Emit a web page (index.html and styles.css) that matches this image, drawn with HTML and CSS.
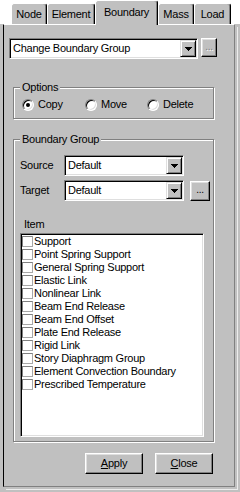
FILE: index.html
```html
<!DOCTYPE html>
<html lang="en">
<head>
    <meta charset="UTF-8">
    <title>Boundary</title>
    <link rel="stylesheet" href="styles.css">
</head>
<body>
    <div class="tabs">
        <div class="tab tab-node">Node</div>
        <div class="tab tab-element">Element</div>
        <div class="tab tab-boundary active">Boundary</div>
        <div class="tab tab-mass">Mass</div>
        <div class="tab tab-load">Load</div>
    </div>

    <div class="panel">
        <div class="top-row">
            <div class="combo combo-main">
                <span class="combo-text">Change Boundary Group</span>
                <span class="drop-btn"><svg width="7" height="4" viewBox="0 0 7 4"><path d="M0 0h7L3.5 4z"/></svg></span>
            </div>
            <button class="btn btn-dots btn-top" disabled>...</button>
        </div>

        <fieldset class="group group-options">
            <legend>Options</legend>
            <div class="radio-row">
                <label class="radio-item item-copy"><span class="radio checked"></span>Copy</label>
                <label class="radio-item item-move"><span class="radio"></span>Move</label>
                <label class="radio-item"><span class="radio"></span>Delete</label>
            </div>
        </fieldset>

        <fieldset class="group group-boundary">
            <legend>Boundary Group</legend>
            <div class="field-row row-source">
                <span class="field-label">Source</span>
                <div class="combo combo-small">
                    <span class="combo-text">Default</span>
                    <span class="drop-btn"><svg width="7" height="4" viewBox="0 0 7 4"><path d="M0 0h7L3.5 4z"/></svg></span>
                </div>
            </div>
            <div class="field-row row-target">
                <span class="field-label">Target</span>
                <div class="combo combo-small">
                    <span class="combo-text">Default</span>
                    <span class="drop-btn"><svg width="7" height="4" viewBox="0 0 7 4"><path d="M0 0h7L3.5 4z"/></svg></span>
                </div>
                <button class="btn btn-dots btn-target">...</button>
            </div>

            <div class="item-label">Item</div>
            <div class="list">
                <div class="list-item"><span class="check"></span>Support</div>
                <div class="list-item"><span class="check"></span>Point Spring Support</div>
                <div class="list-item"><span class="check"></span>General Spring Support</div>
                <div class="list-item"><span class="check"></span>Elastic Link</div>
                <div class="list-item"><span class="check"></span>Nonlinear Link</div>
                <div class="list-item"><span class="check"></span>Beam End Release</div>
                <div class="list-item"><span class="check"></span>Beam End Offset</div>
                <div class="list-item"><span class="check"></span>Plate End Release</div>
                <div class="list-item"><span class="check"></span>Rigid Link</div>
                <div class="list-item"><span class="check"></span>Story Diaphragm Group</div>
                <div class="list-item"><span class="check"></span>Element Convection Boundary</div>
                <div class="list-item"><span class="check"></span>Prescribed Temperature</div>
            </div>
        </fieldset>

        <div class="button-row">
            <button class="btn btn-action"><u>A</u>pply</button>
            <button class="btn btn-action"><u>C</u>lose</button>
        </div>
    </div>
</body>
</html>
```

FILE: styles.css
```css
body{
    margin:0;
    height:492px;
    background:#c0c0c0;
    font-family:"Liberation Sans", Arial, sans-serif;
    font-size:11px;
    letter-spacing:-0.25px;
    line-height:13px;
    color:#000;
    overflow:hidden;
}

/* tab strip */
.tabs{
    height:24px;
    background:#fff;
    display:flex;
    align-items:flex-end;
    padding-left:11px;
}
.tab{
    box-sizing:border-box;
    height:21px;
    padding-top:4px;
    text-align:center;
    background:#c0c0c0;
    border-top:1px solid #fff;
    border-left:1px solid #fff;
    border-right:1px solid #000;
    border-radius:3px 3px 0 0;
    box-shadow:inset -1px 0 0 #808080;
}
.tab-node{ width:36px; }
.tab-element{ width:48px; }
.tab-boundary{ width:63px; }
.tab-mass{ width:36px; }
.tab-load{ width:37px; }
.tab.active{
    position:relative;
    height:25px;
    margin-bottom:-1px;
    padding-top:5px;
}

/* panel */
.panel{
    box-sizing:border-box;
    margin-left:3px;
    width:232px;
    height:463px;
    border-left:1px solid #000;
    border-top:1px solid #fff;
    border-right:1px solid #808080;
    border-bottom:1px solid #808080;
    box-shadow:2px 2px 0 #c0c0c0, 3px 3px 0 #ececec;
}

.top-row{
    display:flex;
    align-items:flex-start;
    margin:13px 0 0 5px;
}

/* combo boxes */
.combo{
    box-sizing:border-box;
    display:flex;
    align-items:center;
    height:21px;
    padding:2px;
    background:#fff;
    border:1px solid;
    border-color:#808080 #fff #fff #808080;
    box-shadow:inset 1px 1px 0 #000, inset -1px -1px 0 #dfdfdf;
}
.combo-main{ width:189px; }
.combo-small{ width:120px; }
.combo-text{
    flex:1;
    padding-left:1px;
    white-space:nowrap;
    overflow:hidden;
}
.drop-btn{
    box-sizing:border-box;
    width:16px;
    height:17px;
    margin-right:-1px;
    display:flex;
    align-items:center;
    justify-content:center;
    background:#c0c0c0;
    border:1px solid;
    border-color:#dfdfdf #000 #000 #dfdfdf;
    box-shadow:inset 1px 1px 0 #fff, inset -1px -1px 0 #808080;
}
.drop-btn svg{
    display:block;
    shape-rendering:crispEdges;
}

/* buttons */
.btn{
    box-sizing:border-box;
    padding:0;
    background:#c0c0c0;
    font:inherit;
    letter-spacing:inherit;
    color:#000;
    border:1px solid;
    border-color:#fff #000 #000 #fff;
    box-shadow:inset -1px -1px 0 #808080, inset 1px 1px 0 #dfdfdf;
}
.btn[disabled]{
    color:#808080;
    text-shadow:1px 1px 0 #fff;
}
.btn-dots{
    font-size:10px;
    line-height:10px;
    padding-bottom:2px;
}
.btn-top{
    width:16px;
    height:19px;
    margin-left:3px;
}
.btn-target{
    width:20px;
    height:20px;
    margin-left:6px;
    align-self:flex-start;
    margin-top:1px;
}
.btn-action{
    width:58px;
    height:21px;
}

/* group boxes */
.group{
    min-width:0;
    width:199px;
    margin:0 0 0 9px;
    padding:0;
    border:1px solid #808080;
    box-shadow:inset 1px 1px 0 #fff, 1px 1px 0 #fff;
}
.group legend{
    margin-left:6px;
    padding:0 2px;
    line-height:13px;
    background:#c0c0c0;
}
.group-options{
    margin-top:22px;
    padding-bottom:7px;
}
.group-boundary{
    margin-top:14px;
    padding-bottom:4px;
}

.radio-row{
    display:flex;
    align-items:center;
    margin-top:4px;
    padding-left:8px;
    height:13px;
}
.radio-item{
    display:flex;
    align-items:center;
    gap:4px;
}
.item-copy{ width:63px; }
.item-move{ width:62px; }
.radio{
    box-sizing:border-box;
    position:relative;
    width:12px;
    height:12px;
    border-radius:50%;
    background:#fff;
    border:1px solid;
    border-color:#808080 #fff #fff #808080;
    box-shadow:inset 1px 1px 0 #000, inset -1px -1px 0 #dfdfdf;
}
.radio.checked::after{
    content:"";
    position:absolute;
    left:3px;
    top:3px;
    width:4px;
    height:4px;
    border-radius:50%;
    background:#000;
}

.field-row{
    display:flex;
    align-items:center;
    padding-left:6px;
}
.row-source{ margin-top:9px; }
.row-target{ margin-top:4px; }
.field-label{
    width:44px;
}

.item-label{
    margin-top:17px;
    padding-left:10px;
}

/* check list */
.list{
    box-sizing:border-box;
    width:184px;
    height:204px;
    margin:2px 0 0 6px;
    padding:1px 0 0 1px;
    background:#fff;
    border:1px solid;
    border-color:#808080 #fff #fff #808080;
    box-shadow:inset 1px 1px 0 #000, inset -1px -1px 0 #dfdfdf;
}
.list-item{
    display:flex;
    align-items:center;
    height:13px;
    white-space:nowrap;
}
.check{
    box-sizing:border-box;
    width:11px;
    height:11px;
    margin-right:1px;
    border:1px solid;
    border-color:#808080 #a8a8a8 #a8a8a8 #808080;
    background:#fff;
}

.button-row{
    display:flex;
    justify-content:flex-end;
    gap:12px;
    width:200px;
    margin:11px 0 0 9px;
}
```
